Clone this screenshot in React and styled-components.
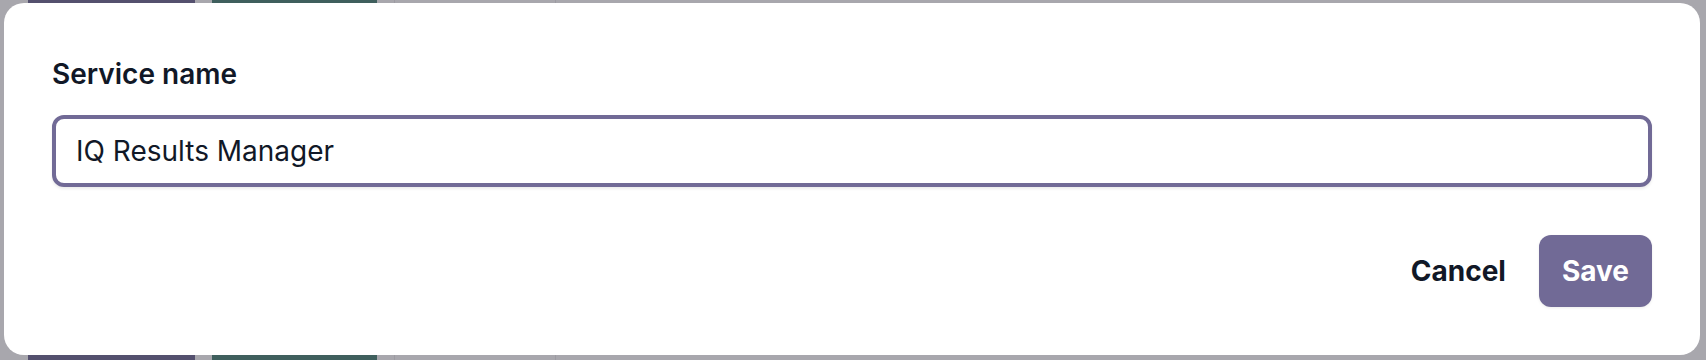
import React from "react";
import styled, { createGlobalStyle } from "styled-components";

const colors = {
  text: "#111827",
  accent: "#716a96",
  backdrop: "#a8a7ad",
  purple: "#54506e",
  green: "#3f5f5d",
  line: "#9c9ba2",
};

const GlobalStyle = createGlobalStyle`
  html, body {
    margin: 0;
    padding: 0;
    background: ${colors.backdrop};
    font-family: Inter, "Noto Sans", sans-serif;
    -webkit-font-smoothing: antialiased;
  }
`;

export default function App() {
  return (
    <>
      <GlobalStyle />
      <Page>
        <Behind>
          <Column tone={colors.purple} width={167} />
          <Column tone={colors.green} width={165} />
          <OutlineColumn />
        </Behind>
        <Modal>
          <Label htmlFor="service-name">Service name</Label>
          <Input id="service-name" defaultValue="IQ Results Manager" />
          <Actions>
            <GhostButton>Cancel</GhostButton>
            <PrimaryButton>Save</PrimaryButton>
          </Actions>
        </Modal>
      </Page>
    </>
  );
}

const Page = styled.div`
  position: relative;
  height: 360px;
  overflow: hidden;
`;

const Behind = styled.div`
  display: flex;
  height: 100%;
  padding-left: 28px;
  gap: 17px;
`;

const Column = styled.div`
  width: ${(props) => props.width}px;
  background: ${(props) => props.tone};
`;

const OutlineColumn = styled.div`
  width: 160px;
  border-left: 1px solid ${colors.line};
  border-right: 1px solid ${colors.line};
`;

const Modal = styled.div`
  position: absolute;
  top: 3px;
  left: 4px;
  width: 1696px;
  height: 352px;
  box-sizing: border-box;
  padding: 48px;
  background: #ffffff;
  border-radius: 20px;
  display: flex;
  flex-direction: column;
`;

const Label = styled.label`
  font-size: 28px;
  line-height: 46px;
  font-weight: 600;
  color: ${colors.text};
  margin-bottom: 18px;
`;

const Input = styled.input`
  box-sizing: border-box;
  height: 72px;
  width: 100%;
  padding: 0 20px;
  border: 4px solid ${colors.accent};
  border-radius: 12px;
  font-family: Inter, "Noto Sans", sans-serif;
  font-size: 28px;
  color: ${colors.text};
  background: #ffffff;
  outline: none;
  box-shadow: 0 2px 3px rgba(0, 0, 0, 0.08);
`;

const Actions = styled.div`
  display: flex;
  justify-content: flex-end;
  align-items: center;
  gap: 10px;
  margin-top: 48px;
`;

const BaseButton = styled.button`
  height: 72px;
  padding: 0 ${(props) => props.pad || 23}px;
  border: none;
  border-radius: 12px;
  font-family: Inter, "Noto Sans", sans-serif;
  font-size: 28px;
  font-weight: 700;
  cursor: pointer;
`;

const GhostButton = styled(BaseButton)`
  background: transparent;
  color: ${colors.text};
`;

const PrimaryButton = styled(BaseButton)`
  background: ${colors.accent};
  color: #ffffff;
  box-shadow: 0 1px 3px rgba(0, 0, 0, 0.08);
`;
